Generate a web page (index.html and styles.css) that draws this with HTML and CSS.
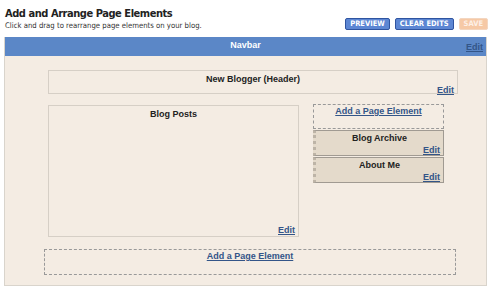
FILE: index.html
```html
<!DOCTYPE html>
<html lang="en">
<head>
    <meta charset="UTF-8">
    <title>Add and Arrange Page Elements</title>
    <link rel="stylesheet" href="styles.css">
</head>
<body>
    <div class="top">
        <div class="intro">
            <h1>Add and Arrange Page Elements</h1>
            <p>Click and drag to rearrange page elements on your blog.</p>
        </div>
        <div class="actions">
            <button class="btn">PREVIEW</button>
            <button class="btn">CLEAR EDITS</button>
            <button class="btn save">SAVE</button>
        </div>
    </div>

    <div class="layout">
        <div class="navbar">
            <span></span>
            <span class="nav-title">Navbar</span>
            <a class="edit nav-edit" href="#">Edit</a>
        </div>
        <div class="canvas">
            <div class="box header-box">
                <div class="box-title">New Blogger (Header)</div>
                <a class="edit" href="#">Edit</a>
            </div>
            <div class="columns">
                <div class="box main-box">
                    <div class="box-title">Blog Posts</div>
                    <a class="edit" href="#">Edit</a>
                </div>
                <div class="sidebar">
                    <div class="add-box add-side"><a href="#">Add a Page Element</a></div>
                    <div class="widget">
                        <div class="box-title">Blog Archive</div>
                        <a class="edit" href="#">Edit</a>
                    </div>
                    <div class="widget">
                        <div class="box-title">About Me</div>
                        <a class="edit" href="#">Edit</a>
                    </div>
                </div>
            </div>
            <div class="add-box add-bottom"><a href="#">Add a Page Element</a></div>
        </div>
    </div>
</body>
</html>
```

FILE: styles.css
```css
body {
    margin: 0;
    background: #fff;
    font-family: "Liberation Sans", Arial, sans-serif;
}
.top {
    display: flex;
    justify-content: space-between;
    align-items: flex-start;
    padding: 6px 12px 0 5px;
    height: 31px;
}
h1 {
    margin: 0;
    font-family: "DejaVu Sans Condensed", "DejaVu Sans", sans-serif;
    font-size: 11px;
    font-weight: bold;
    color: #222;
    line-height: 15px;
    letter-spacing: -0.45px;
}
.intro p {
    margin: 0;
    font-family: "DejaVu Sans Condensed", "DejaVu Sans", sans-serif;
    font-size: 7.7px;
    color: #333;
    line-height: 9px;
}
.actions {
    display: flex;
    gap: 5px;
    margin-top: 12px;
}
.btn {
    height: 12px;
    padding: 0 4px;
    font-family: "DejaVu Sans Condensed", "DejaVu Sans", sans-serif;
    font-size: 7.5px;
    font-weight: bold;
    color: #fff;
    background: #5c86d3;
    border: 1px solid #2f54a0;
    border-radius: 2px;
    line-height: 10px;
}
.save {
    background: #f6c9a6;
    border-color: #f3d6c0;
    color: #fdf0e6;
}
.layout {
    width: 483px;
    margin-left: 4px;
    border: 1px solid #d9d4cc;
    border-top: 0;
    box-sizing: border-box;
}
.navbar {
    display: grid;
    grid-template-columns: 1fr auto 1fr;
    align-items: center;
    height: 19px;
    background: #5b87c7;
    color: #fff;
    font-size: 9px;
    font-weight: bold;
}
.nav-title {
    margin-top: -3px;
}
.nav-edit {
    justify-self: end;
    align-self: end;
    margin: 0 3px 4px 0;
    line-height: 10px;
    color: #fff;
}
.canvas {
    background: #f4ece3;
    padding: 14px 0 10px 0;
}
.edit {
    font-size: 9px;
    font-weight: bold;
    color: #335588;
    text-decoration: underline;
}
.box {
    display: flex;
    flex-direction: column;
    border: 1px solid #d6cfc6;
    box-sizing: border-box;
}
.box .edit {
    align-self: flex-end;
    margin: auto 3px 1px 0;
    line-height: 10px;
}
.box-title {
    text-align: center;
    font-size: 9px;
    font-weight: bold;
    color: #222;
    padding-top: 3px;
    line-height: 11px;
}
.header-box {
    margin-left: 43px;
    width: 410px;
    height: 24px;
}
.columns {
    display: flex;
    gap: 14px;
    margin: 11px 0 0 43px;
}
.main-box {
    width: 251px;
    height: 132px;
}
.sidebar {
    display: flex;
    flex-direction: column;
    gap: 1px;
    width: 131px;
    margin-top: -1px;
}
.add-box {
    border: 1px dashed #999;
    box-sizing: border-box;
    text-align: center;
    font-size: 9px;
    line-height: 11px;
}
.add-box a {
    font-weight: bold;
    color: #335588;
}
.add-side {
    height: 25px;
    padding-top: 1px;
}
.widget {
    display: flex;
    flex-direction: column;
    height: 26px;
    background: #e4dacb;
    border: 1px solid #a09a92;
    border-left: 3px dotted #bdb4a7;
    box-sizing: border-box;
}
.widget .box-title {
    padding-top: 2px;
}
.widget .edit {
    align-self: flex-end;
    margin: auto 3px 0 0;
    line-height: 10px;
}
.add-bottom {
    margin: 12px 0 0 39px;
    width: 412px;
    height: 26px;
    padding-top: 1px;
}
```
